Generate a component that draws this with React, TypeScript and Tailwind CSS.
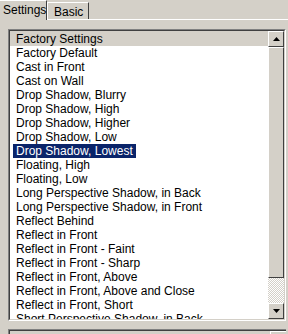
import React from "react";

const items = [
  "Factory Default",
  "Cast in Front",
  "Cast on Wall",
  "Drop Shadow, Blurry",
  "Drop Shadow, High",
  "Drop Shadow, Higher",
  "Drop Shadow, Low",
  "Drop Shadow, Lowest",
  "Floating, High",
  "Floating, Low",
  "Long Perspective Shadow, in Back",
  "Long Perspective Shadow, in Front",
  "Reflect Behind",
  "Reflect in Front",
  "Reflect in Front - Faint",
  "Reflect in Front - Sharp",
  "Reflect in Front, Above",
  "Reflect in Front, Above and Close",
  "Reflect in Front, Short",
  "Short Perspective Shadow, in Back",
];

function Arrow({ up }: { up?: boolean }) {
  return (
    <svg width="7" height="4" viewBox="0 0 7 4">
      {up ? <path d="M3.5 0 L7 4 L0 4 Z" fill="#000" /> : <path d="M0 0 L7 0 L3.5 4 Z" fill="#000" />}
    </svg>
  );
}

function ScrollButton({ up }: { up?: boolean }) {
  return (
    <div className="w-[16px] h-[16px] bg-[#d4d0c8] border-t border-l border-t-white border-l-white border-b border-r border-b-[#404040] border-r-[#404040] flex items-center justify-center shrink-0">
      <Arrow up={up} />
    </div>
  );
}

export default function App() {
  return (
    <div
      className="w-[288px] h-[334px] bg-[#d4d0c8] overflow-hidden text-black text-[12px] leading-none"
      style={{ fontFamily: '"Liberation Sans", Arial, sans-serif' }}
    >
      {/* tab strip */}
      <div className="flex items-end h-[19px]">
        <div className="h-[20px] w-[47px] relative z-10 bg-[#d4d0c8] border-t border-t-white border-r border-r-[#404040] flex items-start pl-[3px] pt-[3px] self-start">
          Settings
        </div>
        <div className="h-[17px] w-[42px] bg-[#d4d0c8] border-t border-l border-t-white border-l-white border-r border-r-[#404040] flex items-start pl-[6px] pt-[3px]">
          Basic
        </div>
        <div className="flex-1" />
      </div>
      <div className="h-[1px] bg-white ml-[47px]" />
      {/* listbox */}
      <div className="mt-[9px] ml-[8px] w-[278px] h-[292px] border-t border-l border-t-[#808080] border-l-[#808080] border-b border-r border-b-white border-r-white">
        <div className="w-full h-full border-t border-l border-t-[#404040] border-l-[#404040] border-b border-r border-b-[#d4d0c8] border-r-[#d4d0c8] flex bg-white overflow-hidden">
          <div className="flex-1 flex flex-col overflow-hidden">
            <div className="h-[15px] bg-[#d4d0c8] pl-[6px] flex items-center shrink-0">Factory Settings</div>
            {items.map((t) => {
              const sel = t === "Drop Shadow, Lowest";
              return (
                <div key={t} className="h-[14px] flex items-center shrink-0 pl-[3px]">
                  <span className={sel ? "bg-[#0a246a] text-white px-[3px] h-full flex items-center" : "px-[3px]"}>{t}</span>
                </div>
              );
            })}
          </div>
          {/* scrollbar */}
          <div className="w-[16px] flex flex-col shrink-0">
            <ScrollButton up />
            <div className="h-[231px] bg-[#d4d0c8] border-t border-l border-t-white border-l-white border-b border-r border-b-[#404040] border-r-[#404040] shrink-0" />
            <div
              className="flex-1"
              style={{
                backgroundColor: "#ffffff",
                backgroundImage:
                  "repeating-conic-gradient(#d4d0c8 0% 25%, #ffffff 0% 50%)",
                backgroundSize: "2px 2px",
              }}
            />
            <ScrollButton />
          </div>
        </div>
      </div>
      {/* next box */}
      <div className="mt-[8px] ml-[8px] w-[278px] h-[20px] border-t border-l border-t-[#808080] border-l-[#808080]">
        <div className="w-full h-full border-t border-l border-t-[#404040] border-l-[#404040] flex justify-end">
          <div className="w-[16px] h-full bg-[#d4d0c8] border-t border-l border-t-white border-l-white" />
        </div>
      </div>
    </div>
  );
}
